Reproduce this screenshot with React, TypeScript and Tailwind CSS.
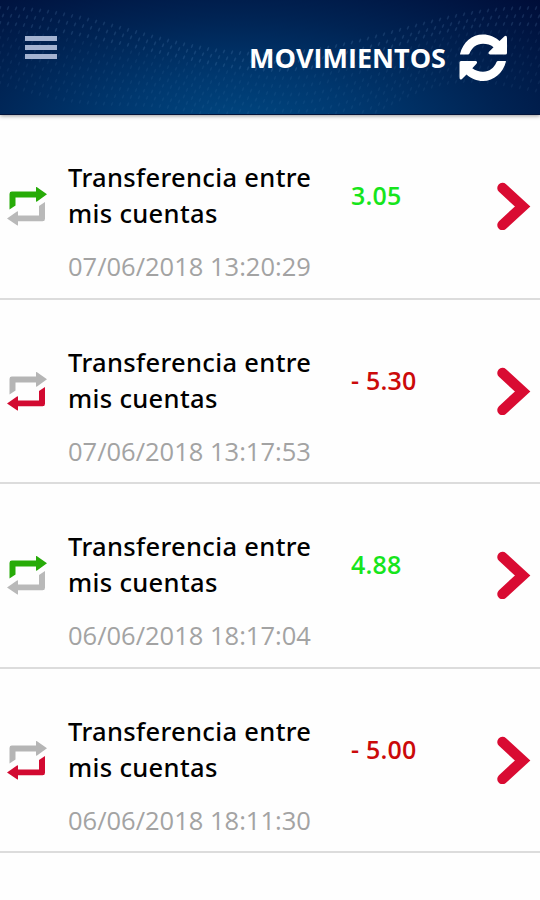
interface Movement {
  description: string;
  amount: string;
  date: string;
  incoming: boolean;
}

const movements: Movement[] = [
  { description: "Transferencia entre mis cuentas", amount: "3.05", date: "07/06/2018 13:20:29", incoming: true },
  { description: "Transferencia entre mis cuentas", amount: "- 5.30", date: "07/06/2018 13:17:53", incoming: false },
  { description: "Transferencia entre mis cuentas", amount: "4.88", date: "06/06/2018 18:17:04", incoming: true },
  { description: "Transferencia entre mis cuentas", amount: "- 5.00", date: "06/06/2018 18:11:30", incoming: false },
];

// rows of faint dots that follow a wave across the header
const dots = Array.from({ length: 11 * 68 }, (_, i) => {
  const row = Math.floor(i / 68);
  const col = i % 68;
  return {
    x: col * 8 + (row % 2) * 3,
    y: 31 + row * 7.5 - 23 * Math.cos(col / 10.5) + row * Math.sin(col / 5),
    opacity: row < 3 ? 0.15 : 0.07,
  };
});

function HeaderWave() {
  return (
    <svg className="absolute inset-0 h-full w-full" viewBox="0 0 540 114" preserveAspectRatio="none">
      {dots.map((dot, i) => (
        <ellipse
          key={i}
          cx={dot.x}
          cy={dot.y}
          rx="0.9"
          ry="2.2"
          transform={`rotate(25 ${dot.x} ${dot.y})`}
          fill="#7fb4e6"
          opacity={dot.opacity}
        />
      ))}
    </svg>
  );
}

function RefreshIcon() {
  return (
    <svg className="h-12 w-12" viewBox="0 0 48 48" fill="#fff">
      <path d="M1 20C4 8 13 0.5 24 0.5C30.5 0.5 36 3 40.5 7L45.5 2.2Q48 1 48 4V19Q48 20.5 46.5 20.5H31Q28.5 20 30 17.8L34.5 13.2C31.5 10.8 28 9.8 24 9.8C17.5 9.8 13 13.5 10.5 19.5Q10 20.5 9 20.5H1.8Q0.8 20.5 1 20Z" />
      <path d="M47 27.5C44 39 35 47 24 47C17.5 47 12 44.5 7.5 40.5L3 45Q0.5 46.5 0.5 43.5V28.5Q0.5 27 2 27H16.5Q19 27.5 17.5 29.7L13.3 34.3C16.2 36.5 20 37.7 24 37.7C30.5 37.7 35 34 37.5 28Q38 27 39 27H46.3Q47.2 27 47 27.5Z" />
    </svg>
  );
}

function TransferIcon({ incoming }: { incoming: boolean }) {
  return (
    <svg className="h-10 w-10" viewBox="0 0 40 40">
      <path
        d="M2.5 22.5V7Q2.5 4.6 4.9 4.6H29V0.5Q29 -0.5 30 0.3L40 7.3L30 14.4Q29 15 29 14V10.4H8.5V18.5Z"
        fill={incoming ? "#27ab08" : "#b5b5b5"}
      />
      <path
        d="M38 15V31.7Q38 34.2 35.6 34.2H11V38Q11 39 10 38.3L0 31.5L10 24.4Q11 23.8 11 24.8V28.4H32V19Z"
        fill={incoming ? "#b9b9b9" : "#d20a31"}
      />
    </svg>
  );
}

function MovementRow({ movement }: { movement: Movement }) {
  return (
    <li className="flex h-[184.5px] border-b-2 border-[#dcdcdc]">
      <div className="w-[68px] pt-[72px] pl-[7px]">
        <TransferIcon incoming={movement.incoming} />
      </div>
      <div className="w-[283px] pt-[44px]">
        <p className="w-[260px] font-['Noto_Sans',sans-serif] text-[25.5px] leading-9 font-medium tracking-[0.34px] text-black">
          {movement.description}
        </p>
        <p className="pt-[17px] text-[25.5px] leading-9 text-[#a3a3a3]">{movement.date}</p>
      </div>
      <p
        className={`w-[145px] pt-[62px] text-[25px] leading-9 font-semibold tracking-[0.2px] ${
          movement.incoming ? "text-[#16e51c]" : "text-[#cb0a0a]"
        }`}
      >
        {movement.amount}
      </p>
      <svg className="mt-[67px] h-12 w-9" viewBox="0 0 36 48" fill="none">
        <path
          d="M6.5 6L26.6 24.5L6.5 43"
          stroke="#d90b32"
          strokeWidth="10.5"
          strokeLinecap="round"
          strokeLinejoin="miter"
        />
      </svg>
    </li>
  );
}

export default function App() {
  return (
    <div className="h-[900px] w-[540px] overflow-hidden bg-[#fefefe] font-['Open_Sans',sans-serif]">
      <header className="relative flex h-[115px] justify-between border-b border-[#02143a] bg-[radial-gradient(ellipse_at_44%_115%,#004882_0%,#00386f_30%,#002353_62%,#000d38_100%)] shadow-[0_1px_4px_rgba(0,0,0,0.4)]">
        <HeaderWave />
        <button className="relative mt-9 ml-[25px] flex h-[23px] w-8 flex-col justify-between" aria-label="Menú">
          <span className="h-[5px] w-full bg-[#a4b3d1]" />
          <span className="h-[5px] w-full bg-[#a4b3d1]" />
          <span className="h-[5px] w-full bg-[#a4b3d1]" />
        </button>
        <div className="relative flex items-start pt-[34px] pr-[33px]">
          <h1 className="pt-[6px] pr-[13px] text-[27px] leading-9 font-bold text-white">MOVIMIENTOS</h1>
          <RefreshIcon />
        </div>
      </header>
      <ul>
        {movements.map((movement) => (
          <MovementRow key={movement.date} movement={movement} />
        ))}
      </ul>
    </div>
  );
}
